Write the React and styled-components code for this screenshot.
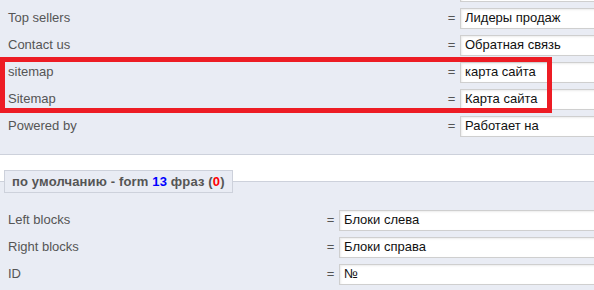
import styled, { createGlobalStyle } from 'styled-components';

const GlobalStyle = createGlobalStyle`
  html, body {
    margin: 0;
    padding: 0;
    background: #fff;
    overflow: hidden;
    font-family: "Liberation Sans", Arial, sans-serif;
  }
`;

// первая строка прокручена за верхний край, видна только нижняя кромка поля
const topRows = [
  { label: '', value: '' },
  { label: 'Top sellers', value: 'Лидеры продаж' },
  { label: 'Contact us', value: 'Обратная связь' },
  { label: 'sitemap', value: 'карта сайта' },
  { label: 'Sitemap', value: 'Карта сайта' },
  { label: 'Powered by', value: 'Работает на' },
];

const formRows = [
  { label: 'Left blocks', value: 'Блоки слева' },
  { label: 'Right blocks', value: 'Блоки справа' },
  { label: 'ID', value: '№' },
];

const PhraseList = ({ rows, labelWidth }) => (
  <Table>
    {rows.map((row, i) => (
      <Row key={i} $labelWidth={labelWidth}>
        <Label>{row.label}</Label>
        <Eq>{row.label ? '=' : ''}</Eq>
        <Field defaultValue={row.value} />
      </Row>
    ))}
  </Table>
);

const App = () => (
  <Page>
    <GlobalStyle />
    <TopSection>
      <PhraseList rows={topRows} labelWidth={437} />
    </TopSection>

    <FormSet>
      <Legend>
        по умолчанию - form <Count>13</Count> фраз (<Missing>0</Missing>)
      </Legend>
      <PhraseList rows={formRows} labelWidth={316} />
    </FormSet>

    <Highlight />
  </Page>
);

export default App;

const Page = styled.div`
  position: relative;
  width: 594px;
  height: 290px;
  overflow: hidden;
`;

const TopSection = styled.div`
  margin-top: -22px;
  padding-bottom: 14px;
  background: #e9ecf4;
  border-bottom: 1px solid #cdd1db;
`;

const Table = styled.div`
  display: flex;
  flex-direction: column;
  padding-left: 8px;
`;

const Row = styled.div`
  display: grid;
  grid-template-columns: ${p => p.$labelWidth}px 13px 1fr;
  align-items: center;
  height: 27px;
`;

const Label = styled.span`
  padding-bottom: 2px;
  font-size: 13px;
  color: #555;
  white-space: nowrap;
`;

const Eq = styled.span`
  padding-bottom: 2px;
  font-size: 13px;
  color: #555;
  text-align: center;
`;

const Field = styled.input`
  box-sizing: border-box;
  margin-left: 2px;
  width: 320px;
  height: 21px;
  padding: 0 4px 2px;
  border: 1px solid #cfcfcf;
  box-shadow: inset 1px 1px 2px rgba(0, 0, 0, 0.08);
  background: #fff;
  font-family: "Liberation Sans", Arial, sans-serif;
  font-size: 13px;
  color: #111;
  outline: none;
`;

const FormSet = styled.fieldset`
  margin: 15px 0 0;
  padding: 14px 0 20px;
  border: none;
  border-top: 1px solid #cdd1db;
  background: #e9ecf4;
  min-width: 0;
`;

const Legend = styled.legend`
  margin-left: 4px;
  padding: 3px 7px;
  border: 1px solid #cdd1db;
  background: #e9ecf4;
  font-size: 13px;
  font-weight: bold;
  color: #555;
  line-height: 15px;
  letter-spacing: 0.15px;
`;

const Count = styled.span`
  color: #0000ff;
`;

const Missing = styled.span`
  color: #ff0000;
`;

const Highlight = styled.div`
  position: absolute;
  left: 0;
  top: 57px;
  width: 552px;
  height: 56px;
  box-sizing: border-box;
  border: 5px solid #ed1c24;
  pointer-events: none;
`;
